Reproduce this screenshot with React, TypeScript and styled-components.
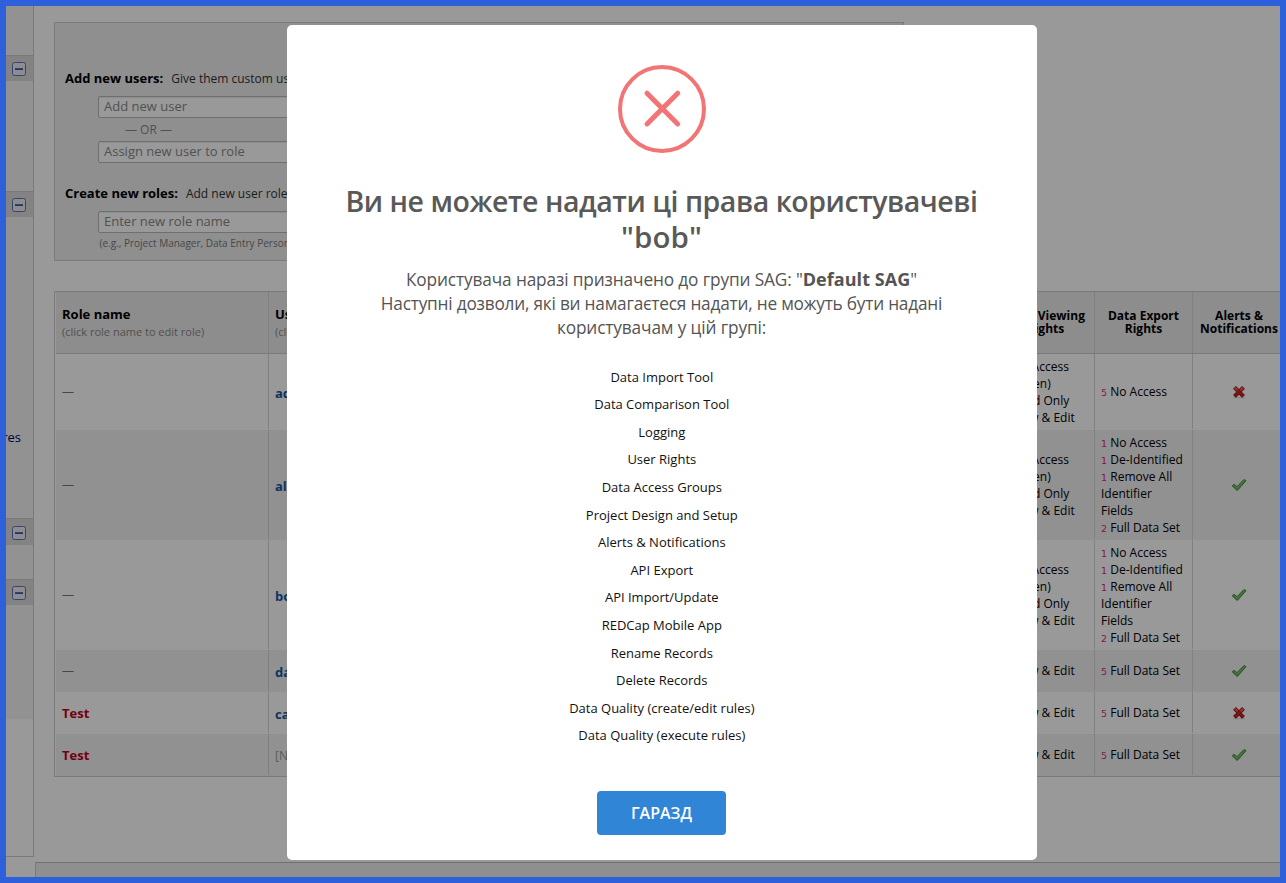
import React from 'react';
import styled, { createGlobalStyle } from 'styled-components';

const GlobalStyle = createGlobalStyle`
  * { box-sizing: border-box; }
  html, body { margin: 0; padding: 0; }
  body { font-family: "Open Sans", sans-serif; font-size: 12px; color: #000; background: #fff; overflow: hidden; }
`;

const Frame = styled.div`
  position: relative;
  width: 1286px;
  height: 883px;
  border: 6px solid #2f60db;
  overflow: hidden;
`;

const Page = styled.div`
  display: flex;
  width: 1274px;
  height: 871px;
  background: #fff;
  overflow: hidden;
`;

const Sidebar = styled.aside`
  flex: 0 0 28px;
  height: 851px;
  border-right: 1px solid #ccc;
  border-bottom: 1px solid #ccc;
  background: #fff;
  overflow: hidden;
`;

const SideBlock = styled.div<{ $h: number }>`
  height: ${(p) => p.$h}px;
  background: #f3f3f3;
  overflow: hidden;
`;

const SideHead = styled.div<{ $h: number }>`
  height: ${(p) => p.$h}px;
  border-top: 1px solid #ccc;
  background: #dbdbdb;
  padding: ${(p) => p.$h - 20}px 0 0 6px;
`;

const CollapseSvg = styled.svg`
  display: block;
`;

const SideLink = styled.div`
  display: flex;
  justify-content: flex-end;
  padding-right: 12px;
  margin-top: 211px;
  font-size: 13px;
  line-height: 18px;
  color: #000066;
  white-space: nowrap;
`;

const Content = styled.main`
  flex: 1 0 auto;
  width: 1300px;
  padding: 16px 0 0 1px;
  display: flex;
  flex-direction: column;
`;

const AddPanel = styled.section`
  flex: none;
  width: 850px;
  height: 239px;
  margin-left: 19px;
  border: 1px solid #ccc;
  background: #eee;
  padding: 46px 0 0 10px;
`;

const PanelLine = styled.div<{ $gapTop?: number }>`
  display: flex;
  align-items: baseline;
  gap: 8px;
  height: 18px;
  margin: ${(p) => p.$gapTop ?? 0}px 0 9px;
  line-height: 18px;
  font-size: 12px;
  color: #333;
  white-space: nowrap;
`;

const PanelTitle = styled.b`
  font-size: 13px;
  color: #000;
`;

const Field = styled.div`
  width: 300px;
  height: 22px;
  margin-left: 33px;
  padding-left: 5px;
  border: 1px solid #b9b9b9;
  border-radius: 2px;
  box-shadow: inset 0 1px 1px rgba(0, 0, 0, 0.08);
  background: #fff;
  color: #888;
  font-size: 13px;
  line-height: 19px;
`;

const OrLine = styled.div`
  height: 23px;
  padding-left: 60px;
  line-height: 24px;
  font-size: 12px;
  color: #888;
`;

const Hint = styled.div`
  padding-left: 34.5px;
  margin-top: 3px;
  font-size: 10px;
  line-height: 14px;
  color: #777;
`;

const Table = styled.div`
  flex: none;
  width: 1240px;
  margin: 30px 0 0 19px;
  border: 1px solid #ccc;
`;

const Row = styled.div<{ $h: number; $alt?: boolean; $head?: boolean }>`
  display: grid;
  grid-template-columns: 213px 728px 98px 98px 93px;
  height: ${(p) => p.$h}px;
  margin-left: 1px;
  border-bottom: ${(p) => (p.$head ? '1px solid #ccc' : '0')};
  background: ${(p) => (p.$head ? '#ebebeb' : p.$alt ? '#f2f2f2' : '#fff')};
`;

const Cell = styled.div<{ $center?: boolean; $head?: boolean }>`
  display: flex;
  flex-direction: column;
  justify-content: center;
  align-items: ${(p) => (p.$center ? 'center' : 'flex-start')};
  padding: 0 6px;
  border-right: 1px solid #d6d6d6;
  margin-bottom: ${(p) => (p.$head ? 0 : 1)}px;
  white-space: nowrap;
  line-height: 17px;
`;

const HeadName = styled.b`
  font-size: 13px;
  line-height: 18px;
`;

const HeadNote = styled.span`
  font-size: 11px;
  line-height: 17px;
  color: #888;
`;

const HeadCenter = styled.b`
  font-size: 12px;
  line-height: 13px;
  text-align: center;
  padding-bottom: 1px;
`;

const Dash = styled.span`
  color: #777;
`;

const RoleLink = styled.b`
  font-size: 13px;
  color: #c00020;
  padding-top: 1px;
`;

const UserLink = styled.b`
  font-size: 13px;
  color: #1259a5;
  padding-top: 3px;
`;

const Muted = styled.span`
  color: #999;
  padding-top: 1px;
`;

const LineItem = styled.span`
  display: flex;
  align-items: baseline;
  height: 17px;
`;

const Count = styled.span`
  font-family: "DejaVu Sans", sans-serif;
  font-size: 9.5px;
  line-height: 16px;
  color: #dd2a79;
  margin-right: 3.2px;
`;

const Backdrop = styled.div`
  position: absolute;
  inset: 0;
  padding: 19px 0 0 281px;
  background: rgba(0, 0, 0, 0.4);
`;

const Dialog = styled.div`
  width: 750px;
  height: 835px;
  padding-top: 40px;
  border-radius: 5px;
  background: #fff;
  display: flex;
  flex-direction: column;
  align-items: center;
  text-align: center;
`;

const ErrorSvg = styled.svg`
  flex: none;
`;

const Title = styled.h2`
  height: 72px;
  margin: 30px 1px 0 0;
  font-size: 28.5px;
  font-weight: 600;
  line-height: 36px;
  color: #595959;
  white-space: nowrap;
`;

const TitleLine = styled.span<{ $size: number; $spacing: number }>`
  display: block;
  font-size: ${(p) => p.$size}px;
  letter-spacing: ${(p) => p.$spacing}px;
`;

const Message = styled.p`
  margin: 13px 1px 0 0;
  font-size: 17.25px;
  line-height: 24px;
  color: #545454;
  white-space: nowrap;
`;

const MessageLine = styled.span<{ $spacing: number }>`
  display: block;
  height: 24px;
  letter-spacing: ${(p) => p.$spacing}px;
`;

const GroupName = styled.b`
  font-size: 18px;
  line-height: 20px;
  letter-spacing: 0.05px;
`;

const RightsList = styled.ul`
  list-style: none;
  margin: 23.6px 0.4px 0 0;
  padding: 0;
  font-size: 13px;
  color: #111;
`;

const RightsItem = styled.li`
  height: 27.6px;
  line-height: 27px;
`;

const OkButton = styled.button`
  width: 129px;
  height: 44px;
  margin: 41px 1px 0 0;
  border: 0;
  border-radius: 4px;
  background: #3085d6;
  color: #fff;
  font-family: "Open Sans", sans-serif;
  font-size: 16px;
  font-weight: 600;
`;

const CollapseIcon = () => (
  <CollapseSvg width="14" height="14" viewBox="0 0 14 14">
    <rect x="0.5" y="0.5" width="13" height="13" rx="2" fill="#ececf0" stroke="#6072b8" />
    <path d="M3 6.5H11" stroke="#6072b8" />
    <path d="M3 7.5H11" stroke="#4055a5" />
  </CollapseSvg>
);

const CrossIcon = () => (
  <svg width="16" height="16" viewBox="0 0 16 16">
    <path d="M2 13.7H14" stroke="#000" strokeOpacity=".15" />
    <path d="M3.5 3.3L12.5 12.3M12.5 3.3L3.5 12.3" stroke="#a40e0e" strokeWidth="4" />
    <path d="M4 3.8L12 11.8M12 3.8L4 11.8" stroke="#cf2626" strokeWidth="2.2" />
    <path d="M3.8 3.6L6.5 6.3M12.2 3.6L9.5 6.3" stroke="#e46464" strokeWidth="2" />
  </svg>
);

const CheckIcon = () => (
  <svg width="16" height="16" viewBox="0 0 16 16">
    <path d="M1.3 9L3 7.2L6 9.7L13 2.5L15 3.7L6.3 13.5Z" fill="#69b85a" stroke="#40883a" strokeWidth="1" strokeLinejoin="round" />
    <path d="M3 8.4L6 11L13.5 3.6" fill="none" stroke="#83c876" strokeWidth="1" />
  </svg>
);

type Line = [string, string];

const viewShort: Line[] = [['5', 'View & Edit']];
const viewLong: Line[] = [['1', 'No Access'], ['', '(Hidden)'], ['1', 'Read Only'], ['3', 'View & Edit']];
const exportLong: Line[] = [
  ['1', 'No Access'],
  ['1', 'De-Identified'],
  ['1', 'Remove All'],
  ['', 'Identifier'],
  ['', 'Fields'],
  ['2', 'Full Data Set'],
];
const exportFull: Line[] = [['5', 'Full Data Set']];

const rows = [
  { h: 76, role: '', user: 'admin', view: viewLong, exp: [['5', 'No Access']] as Line[], ok: false },
  { h: 110, role: '', user: 'alice', view: viewLong, exp: exportLong, ok: true },
  { h: 110, role: '', user: 'bob', view: viewLong, exp: exportLong, ok: true },
  { h: 42, role: '', user: 'dan', view: viewShort, exp: exportFull, ok: true },
  { h: 42, role: 'Test', user: 'carol', view: viewShort, exp: exportFull, ok: false },
  { h: 42, role: 'Test', user: '', view: viewShort, exp: exportFull, ok: true },
];

const rights = [
  'Data Import Tool',
  'Data Comparison Tool',
  'Logging',
  'User Rights',
  'Data Access Groups',
  'Project Design and Setup',
  'Alerts & Notifications',
  'API Export',
  'API Import/Update',
  'REDCap Mobile App',
  'Rename Records',
  'Delete Records',
  'Data Quality (create/edit rules)',
  'Data Quality (execute rules)',
];

const Lines = ({ items }: { items: Line[] }) => (
  <>
    {items.map(([n, label], i) => (
      <LineItem key={i}>
        {n && <Count>{n}</Count>}
        {label}
      </LineItem>
    ))}
  </>
);

const Footer = styled.footer`
  flex: none;
  height: 20px;
  margin-top: 85px;
  border-top: 1px solid #bbb;
  border-left: 1px solid #ccc;
  background: #eee;
`;

export default function App() {
  return (
    <Frame>
      <GlobalStyle />
      <Page>
        <Sidebar>
          <SideBlock $h={49} />
          <SideHead $h={26}><CollapseIcon /></SideHead>
          <SideBlock $h={110} />
          <SideHead $h={26}><CollapseIcon /></SideHead>
          <SideBlock $h={301}><SideLink>procedures</SideLink></SideBlock>
          <SideHead $h={27}><CollapseIcon /></SideHead>
          <SideBlock $h={34} />
          <SideHead $h={26}><CollapseIcon /></SideHead>
          <SideBlock $h={114} />
        </Sidebar>
        <Content>
          <AddPanel>
            <PanelLine>
              <PanelTitle>Add new users:</PanelTitle>
              <span>Give them custom user rights</span>
            </PanelLine>
            <Field>Add new user</Field>
            <OrLine>— OR —</OrLine>
            <Field>Assign new user to role</Field>
            <PanelLine $gapTop={21}>
              <PanelTitle>Create new roles:</PanelTitle>
              <span>Add new user roles</span>
            </PanelLine>
            <Field>Enter new role name</Field>
            <Hint>(e.g., Project Manager, Data Entry Person)</Hint>
          </AddPanel>
          <Table>
            <Row $h={62} $head>
              <Cell $head>
                <HeadName>Role name</HeadName>
                <HeadNote>(click role name to edit role)</HeadNote>
              </Cell>
              <Cell $head>
                <HeadName>Username</HeadName>
                <HeadNote>(click username to edit)</HeadNote>
              </Cell>
              <Cell $head $center><HeadCenter>Data Viewing<br />Rights</HeadCenter></Cell>
              <Cell $head $center><HeadCenter>Data Export<br />Rights</HeadCenter></Cell>
              <Cell $head $center><HeadCenter>Alerts &amp;<br />Notifications</HeadCenter></Cell>
            </Row>
            {rows.map((r, i) => (
              <Row key={i} $h={r.h} $alt={i % 2 === 1}>
                <Cell>{r.role ? <RoleLink>{r.role}</RoleLink> : <Dash>—</Dash>}</Cell>
                <Cell>{r.user ? <UserLink>{r.user}</UserLink> : <Muted>[No users assigned]</Muted>}</Cell>
                <Cell><Lines items={r.view} /></Cell>
                <Cell><Lines items={r.exp} /></Cell>
                <Cell $center>{r.ok ? <CheckIcon /> : <CrossIcon />}</Cell>
              </Row>
            ))}
          </Table>
          <Footer />
        </Content>
      </Page>
      <Backdrop>
        <Dialog>
          <ErrorSvg width="88" height="88" viewBox="0 0 88 88">
            <circle cx="44" cy="44" r="42" fill="none" stroke="#f27474" strokeWidth="4" />
            <path d="M29 28.2L59.7 58.9M59.7 28.2L29 58.9" stroke="#f27474" strokeWidth="5" strokeLinecap="round" />
          </ErrorSvg>
          <Title>
            <TitleLine $size={28.5} $spacing={-0.46}>Ви не можете надати ці права користувачеві</TitleLine>
            <TitleLine $size={29.5} $spacing={0.1}>"bob"</TitleLine>
          </Title>
          <Message>
            <MessageLine $spacing={-0.13}>Користувача наразі призначено до групи SAG: "<GroupName>Default SAG</GroupName>"</MessageLine>
            <MessageLine $spacing={-0.215}>Наступні дозволи, які ви намагаєтеся надати, не можуть бути надані</MessageLine>
            <MessageLine $spacing={-0.13}>користувачам у цій групі:</MessageLine>
          </Message>
          <RightsList>
            {rights.map((r) => <RightsItem key={r}>{r}</RightsItem>)}
          </RightsList>
          <OkButton>ГАРАЗД</OkButton>
        </Dialog>
      </Backdrop>
    </Frame>
  );
}
